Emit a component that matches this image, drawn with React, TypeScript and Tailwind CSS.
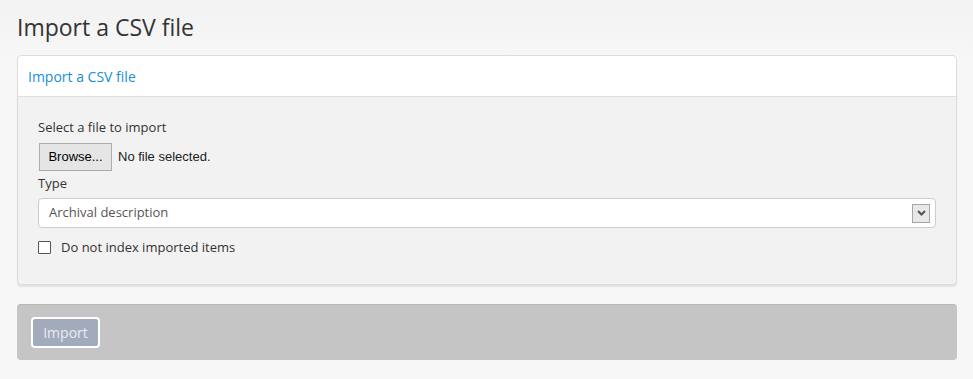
import React from "react";

export default function App() {
  return (
    <div
      className="min-h-[379px] w-full bg-[#f7f7f7] pt-[11px] px-[17px] pb-[20px]"
      style={{ fontFamily: '"Open Sans", sans-serif' }}
    >
      <div className="absolute inset-x-0 top-0 h-[60px] bg-gradient-to-b from-[#f2f2f2] to-[#f7f7f7] pointer-events-none" />
      <h1 className="relative text-[23px] leading-[32px] text-[#333] font-normal h-[44px]">Import a CSV file</h1>
      <div className="relative w-[940px] rounded-[4px] border border-[#dcdcdc] shadow-[0_2px_1px_rgba(0,0,0,0.08)] bg-[#f2f2f2]">
        <div className="h-[41px] bg-white rounded-t-[4px] border-b border-[#e0e0e0] flex items-center px-[10px]">
          <span className="text-[14px] text-[#1a8ed8]">Import a CSV file</span>
        </div>
        <div className="px-[20px] pt-[21px] pb-[30px] text-[13px] text-[#333]">
          <div className="leading-[18px]">Select a file to import</div>
          <div className="flex items-center mt-[7px]">
            <button
              className="h-[28px] w-[73px] ml-[1px] border border-[#adadad] bg-[#e5e5e5] text-[13px] text-black"
              style={{ fontFamily: '"Liberation Sans", Arial, sans-serif' }}
            >
              Browse...
            </button>
            <span
              className="ml-[6px] text-[13px] text-[#222]"
              style={{ fontFamily: '"Liberation Sans", Arial, sans-serif' }}
            >
              No file selected.
            </span>
          </div>
          <div className="leading-[18px] mt-[3px]">Type</div>
          <div className="mt-[6px] h-[30px] w-[898px] bg-white border border-[#cccccc] rounded-[4px] flex items-center justify-between pl-[10px] pr-[5px]">
            <span className="text-[#555]">Archival description</span>
            <span className="w-[18px] h-[19px] border border-[#a6a6a6] bg-[#e8e8e8] flex items-center justify-center">
              <svg width="9" height="6" viewBox="0 0 9 6">
                <path d="M1 1 L4.5 4.5 L8 1" stroke="#555" strokeWidth="2" fill="none" />
              </svg>
            </span>
          </div>
          <label className="flex items-center mt-[12px] h-[14px]">
            <span className="w-[13px] h-[13px] border border-[#555] bg-white rounded-[1px]" />
            <span className="ml-[10px] leading-[18px]">Do not index imported items</span>
          </label>
        </div>
      </div>
      <div className="relative mt-[19px] w-[940px] h-[56px] rounded-[4px] bg-[#c5c5c5] border-t border-[#b8b8b8] flex items-center px-[14px]">
        <button className="h-[31px] w-[69px] rounded-[4px] border-2 border-white bg-[#a2abbb] text-[14px] text-[#e9ecf2]">
          Import
        </button>
      </div>
    </div>
  );
}
